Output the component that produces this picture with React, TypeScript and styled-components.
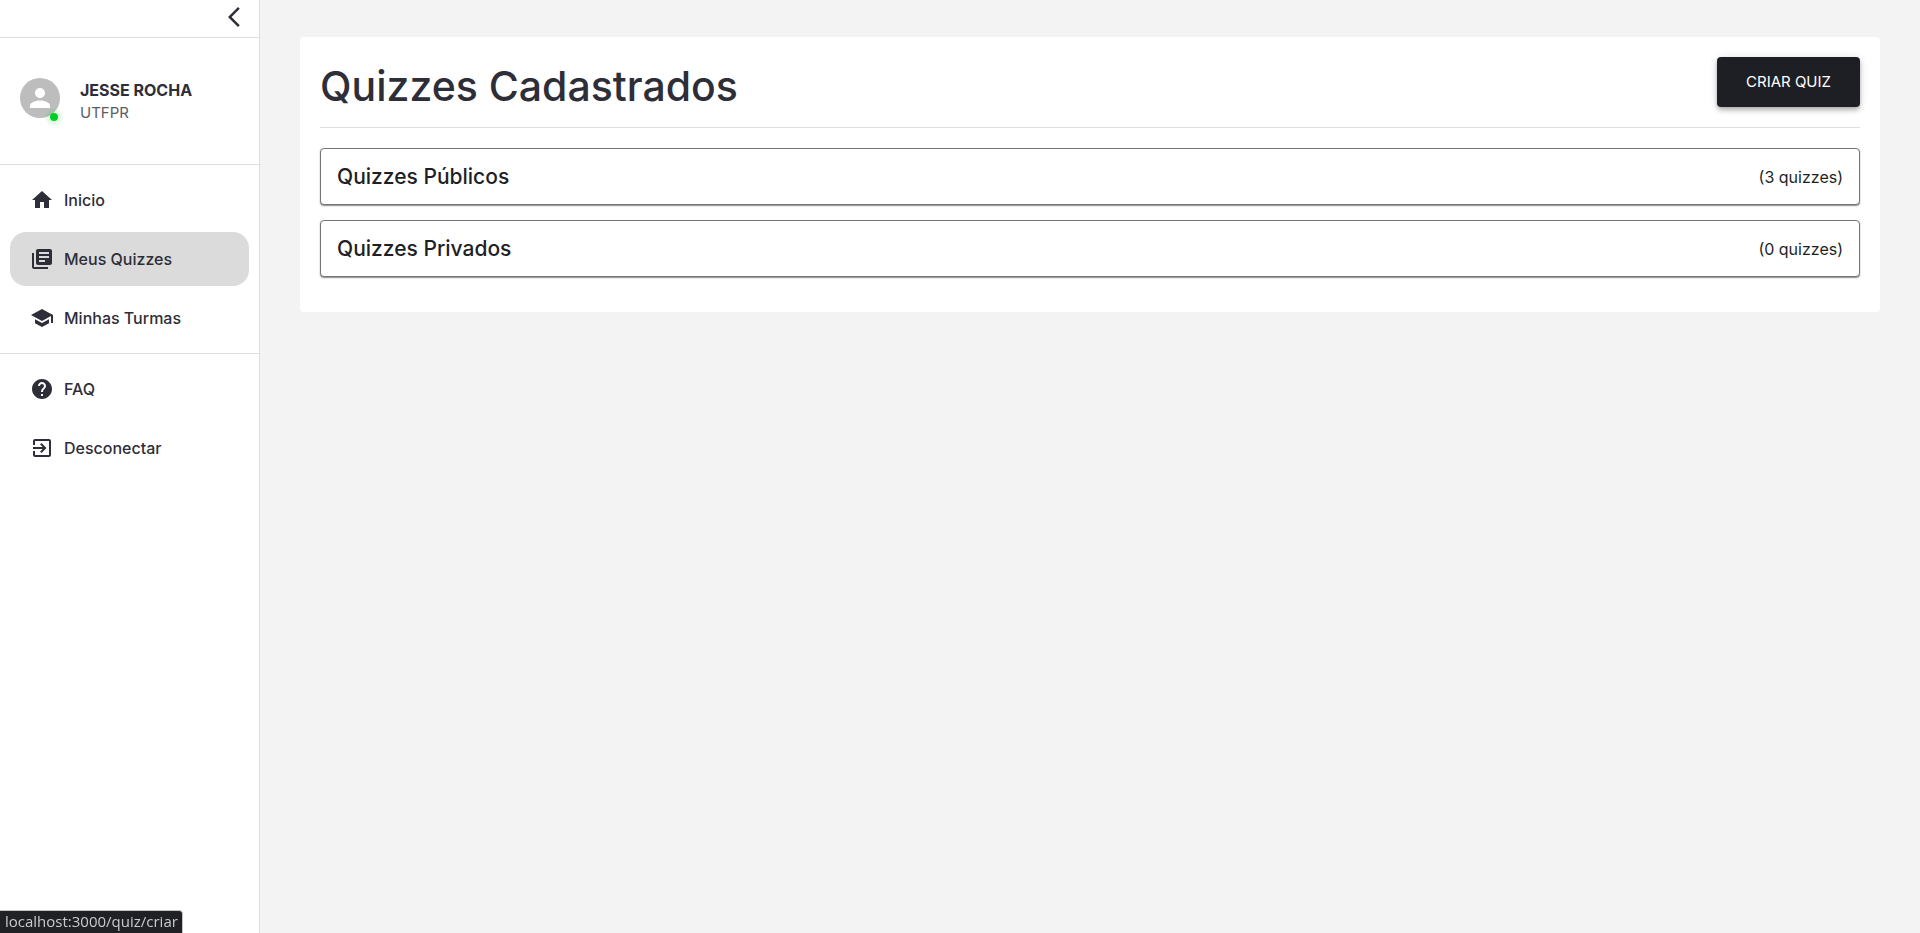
import React from "react";
import styled, { createGlobalStyle, css } from "styled-components";
import {
  MdArrowBackIosNew,
  MdExitToApp,
  MdHelp,
  MdHome,
  MdLibraryBooks,
  MdPerson,
  MdSchool,
} from "react-icons/md";

const GlobalStyle = createGlobalStyle`
  *, *::before, *::after { box-sizing: border-box; }
  body {
    margin: 0;
    background: #f3f3f3;
    color: #2e2e38;
    font-family: Inter, "Liberation Sans", sans-serif;
  }
  h1, h2, p, ul { margin: 0; padding: 0; }
`;

const Layout = styled.div`
  display: flex;
  min-height: 100vh;
`;

const Sidebar = styled.aside`
  display: flex;
  flex-direction: column;
  flex: 0 0 260px;
  background: #fff;
  border-right: 1px solid #dedede;
`;

const SidebarHeader = styled.div`
  display: flex;
  justify-content: flex-end;
  align-items: center;
  height: 38px;
  padding: 0 13px 4px;
  border-bottom: 1px solid #dedede;
`;

const CollapseButton = styled.button`
  display: flex;
  padding: 0;
  border: 0;
  background: none;
  color: inherit;
  cursor: pointer;
`;

const Profile = styled.section`
  display: flex;
  align-items: center;
  gap: 20px;
  padding: 40px 20px;
  border-bottom: 1px solid #dedede;
`;

const Avatar = styled.div`
  position: relative;
  display: flex;
  align-items: center;
  justify-content: center;
  width: 40px;
  height: 40px;
  margin-bottom: 6px;
  border-radius: 50%;
  background: #bdbdbd;
  color: #fff;
`;

const OnlineDot = styled.span`
  position: absolute;
  right: 2px;
  bottom: -3px;
  width: 8px;
  height: 8px;
  border-radius: 50%;
  background: #00d026;
  box-shadow: 0 0 0 3px rgba(0, 208, 38, 0.06), 0 0 0 5px rgba(0, 208, 38, 0.06);
`;

const UserName = styled.p`
  font-size: 16px;
  font-weight: 700;
  line-height: 24px;
`;

const UserGroup = styled.p`
  color: #5c5c64;
  font-size: 15px;
  line-height: 22px;
`;

const NavList = styled.ul`
  display: flex;
  flex-direction: column;
  gap: 5px;
  padding: 8px 10px;
  list-style: none;

  & + & {
    border-top: 1px solid #dedede;
  }
`;

const NavLink = styled.a<{ $active?: boolean }>`
  display: flex;
  align-items: center;
  gap: 10px;
  height: 54px;
  padding: 0 20px;
  border-radius: 16px;
  color: inherit;
  font-size: 16px;
  font-weight: 500;
  text-decoration: none;
  ${({ $active }) => $active && css`background: #dbdbdb;`}
`;

const Main = styled.main`
  flex: 1;
  min-width: 0;
  padding: 37px 40px;
`;

const Card = styled.section`
  padding: 20px 20px 35px;
  border-radius: 4px;
  background: #fff;
`;

const CardHeader = styled.header`
  display: flex;
  justify-content: space-between;
  align-items: flex-start;
  padding-bottom: 20px;
  margin-bottom: 20px;
  border-bottom: 1px solid #dedede;
`;

const Title = styled.h1`
  padding-top: 4px;
  font-size: 41px;
  font-weight: 500;
  line-height: 50px;
  height: 50px;
`;

const CreateButton = styled.button`
  height: 50px;
  padding: 0 29px 2px;
  border: 0;
  border-radius: 4px;
  background: #1e1f25;
  box-shadow: 0 2px 4px -1px rgba(0, 0, 0, 0.2), 0 4px 5px rgba(0, 0, 0, 0.14),
    0 1px 10px rgba(0, 0, 0, 0.12);
  color: #fff;
  font: 400 15px Inter, "Liberation Sans", sans-serif;
  text-transform: uppercase;
  cursor: pointer;
`;

const Groups = styled.div`
  display: flex;
  flex-direction: column;
  gap: 15px;
`;

const GroupRow = styled.button`
  display: flex;
  justify-content: space-between;
  align-items: center;
  width: 100%;
  height: 57px;
  padding: 0 16px;
  border: 1px solid #757575;
  border-radius: 4px;
  background: #fff;
  box-shadow: 0 1px 1px rgba(0, 0, 0, 0.3), 0 1px 2px rgba(0, 0, 0, 0.2);
  color: #1e1f25;
  font-family: inherit;
  cursor: pointer;
`;

const GroupName = styled.span`
  font-size: 21px;
  font-weight: 500;
`;

const GroupCount = styled.span`
  font-size: 16px;
`;

const StatusBar = styled.div`
  position: fixed;
  left: 0;
  bottom: 0;
  padding: 1px 4px 2px 5px;
  border-top: 1px solid #c4c4c4;
  border-right: 1px solid #c4c4c4;
  border-top-right-radius: 4px;
  background: #202124;
  color: #c9cacd;
  font: 15px/19px "Open Sans", sans-serif;
`;

const mainLinks = [
  { label: "Inicio", Icon: MdHome },
  { label: "Meus Quizzes", Icon: MdLibraryBooks, active: true },
  { label: "Minhas Turmas", Icon: MdSchool },
];

const extraLinks = [
  { label: "FAQ", Icon: MdHelp },
  { label: "Desconectar", Icon: MdExitToApp },
];

const groups = [
  { name: "Quizzes Públicos", count: 3 },
  { name: "Quizzes Privados", count: 0 },
];

function Navigation({ links }: { links: { label: string; Icon: React.ElementType; active?: boolean }[] }) {
  return (
    <NavList>
      {links.map(({ label, Icon, active }) => (
        <li key={label}>
          <NavLink href="#" $active={active} aria-current={active ? "page" : undefined}>
            <Icon size={24} />
            {label}
          </NavLink>
        </li>
      ))}
    </NavList>
  );
}

export default function App() {
  return (
    <>
      <GlobalStyle />
      <Layout>
        <Sidebar>
          <SidebarHeader>
            <CollapseButton aria-label="Recolher menu">
              <MdArrowBackIosNew size={24} />
            </CollapseButton>
          </SidebarHeader>
          <Profile>
            <Avatar>
              <MdPerson size={30} />
              <OnlineDot />
            </Avatar>
            <div>
              <UserName>JESSE ROCHA</UserName>
              <UserGroup>UTFPR</UserGroup>
            </div>
          </Profile>
          <nav>
            <Navigation links={mainLinks} />
            <Navigation links={extraLinks} />
          </nav>
        </Sidebar>
        <Main>
          <Card>
            <CardHeader>
              <Title>Quizzes Cadastrados</Title>
              <CreateButton>Criar Quiz</CreateButton>
            </CardHeader>
            <Groups>
              {groups.map(({ name, count }) => (
                <GroupRow key={name}>
                  <GroupName>{name}</GroupName>
                  <GroupCount>({count} quizzes)</GroupCount>
                </GroupRow>
              ))}
            </Groups>
          </Card>
        </Main>
      </Layout>
      <StatusBar>localhost:3000/quiz/criar</StatusBar>
    </>
  );
}
